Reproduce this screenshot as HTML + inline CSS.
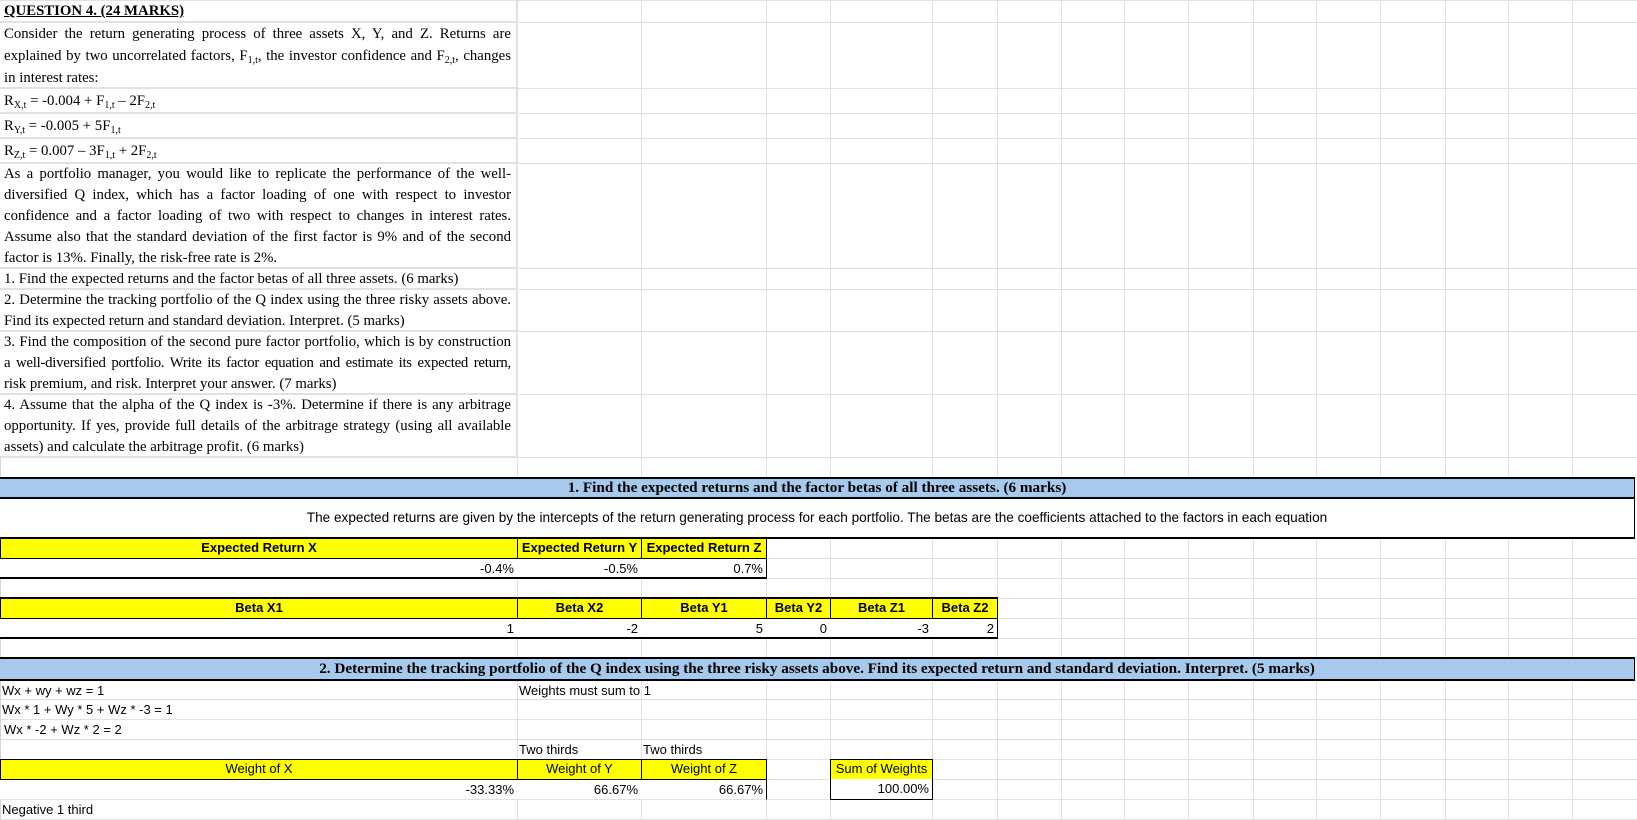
<!DOCTYPE html>
<html><head><meta charset="utf-8"><style>
body{margin:0;width:1637px;height:820px;overflow:hidden;background:#fff;position:relative;font-family:"Liberation Sans",sans-serif;}
.v{position:absolute;top:0;height:820px;width:1px;background:#e1e1e1}
.h{position:absolute;left:0;width:1637px;height:1px;background:#e1e1e1}
.c{position:absolute;box-sizing:border-box;background:#fff;overflow:hidden;white-space:nowrap}
.q{position:absolute;left:0;width:517px;box-sizing:border-box;padding:0 5px 0 4px;font-family:"Liberation Serif",serif;font-size:14.8px;line-height:21px;color:#000;background:#fff;border-bottom:1px solid #e1e1e1;border-right:1px solid #e1e1e1;white-space:nowrap}
.q div{text-align:justify;text-align-last:justify;white-space:normal}
.q div.l{text-align-last:left}
.q sub{font-size:10px;vertical-align:-3px;line-height:0}
.s{font-size:13px;line-height:20px}
.y{background:#ffff00;border:1px solid #000;text-align:center;font-weight:bold;font-size:13px;line-height:18px}
.yn{background:#ffff00;border:1px solid #000;text-align:center;font-size:13px;line-height:18px}
.r{text-align:right;font-size:13px;line-height:19px;padding-right:3px;border-right:1px solid #000;border-bottom:2px solid #000}
.blue{background:#a6c9ec;border-top:2px solid #000;border-bottom:2px solid #000;border-right:1px solid #000;text-align:center;font-family:"Liberation Serif",serif;font-weight:bold;font-size:15.2px;line-height:18px}
</style></head><body>
<div class="v" style="left:517px"></div><div class="v" style="left:641px"></div><div class="v" style="left:766px"></div><div class="v" style="left:830px"></div><div class="v" style="left:932px"></div><div class="v" style="left:997px"></div><div class="v" style="left:1061px"></div><div class="v" style="left:1124px"></div><div class="v" style="left:1188px"></div><div class="v" style="left:1253px"></div><div class="v" style="left:1316px"></div><div class="v" style="left:1380px"></div><div class="v" style="left:1445px"></div><div class="v" style="left:1508px"></div><div class="v" style="left:1572px"></div>
<div class="h" style="top:0"></div><div class="h" style="top:22px"></div><div class="h" style="top:88px"></div><div class="h" style="top:113px"></div><div class="h" style="top:138px"></div><div class="h" style="top:163px"></div><div class="h" style="top:268px"></div><div class="h" style="top:289px"></div><div class="h" style="top:331px"></div><div class="h" style="top:394px"></div><div class="h" style="top:457px"></div><div class="h" style="top:478px"></div><div class="h" style="top:498px"></div><div class="h" style="top:538px"></div><div class="h" style="top:558px"></div><div class="h" style="top:578px"></div><div class="h" style="top:598px"></div><div class="h" style="top:618px"></div><div class="h" style="top:638px"></div><div class="h" style="top:658px"></div><div class="h" style="top:680px"></div><div class="h" style="top:699px"></div><div class="h" style="top:719px"></div><div class="h" style="top:739px"></div><div class="h" style="top:759px"></div><div class="h" style="top:779px"></div><div class="h" style="top:799px"></div><div class="h" style="top:819px"></div>
<div class="v" style="left:0;background:#d6d6d6"></div>

<div class="q" style="top:1px;height:21px;font-weight:bold;text-decoration:underline">QUESTION 4. (24 MARKS)</div>
<div class="q" style="top:23px;height:65px;line-height:22px"><div>Consider the return generating process of three assets X, Y, and Z. Returns are</div><div>explained by two uncorrelated factors, F<sub>1,t</sub>, the investor confidence and F<sub>2,t</sub>, changes</div><div class="l">in interest rates:</div></div>
<div class="q" style="top:89px;height:24px;line-height:24px">R<sub>X,t</sub> = -0.004 + F<sub>1,t</sub> – 2F<sub>2,t</sub></div>
<div class="q" style="top:114px;height:24px;line-height:24px">R<sub>Y,t</sub> = -0.005 + 5F<sub>1,t</sub></div>
<div class="q" style="top:139px;height:24px;line-height:24px">R<sub>Z,t</sub> = 0.007 – 3F<sub>1,t</sub> + 2F<sub>2,t</sub></div>
<div class="q" style="top:164px;height:104px"><div>As a portfolio manager, you would like to replicate the performance of the well-</div><div>diversified Q index, which has a factor loading of one with respect to investor</div><div>confidence and a factor loading of two with respect to changes in interest rates.</div><div>Assume also that the standard deviation of the first factor is 9% and of the second</div><div class="l">factor is 13%. Finally, the risk-free rate is 2%.</div></div>
<div class="q" style="top:269px;height:20px">1. Find the expected returns and the factor betas of all three assets. (6 marks)</div>
<div class="q" style="top:290px;height:41px"><div>2. Determine the tracking portfolio of the Q index using the three risky assets above.</div><div class="l">Find its expected return and standard deviation. Interpret. (5 marks)</div></div>
<div class="q" style="top:332px;height:62px"><div>3. Find the composition of the second pure factor portfolio, which is by construction</div><div style="letter-spacing:-0.25px">a well-diversified portfolio. Write its factor equation and estimate its expected return,</div><div class="l">risk premium, and risk. Interpret your answer. (7 marks)</div></div>
<div class="q" style="top:395px;height:62px"><div>4. Assume that the alpha of the Q index is -3%. Determine if there is any arbitrage</div><div>opportunity. If yes, provide full details of the arbitrage strategy (using all available</div><div class="l">assets) and calculate the arbitrage profit. (6 marks)</div></div>

<div class="c blue" style="left:0;top:477px;width:1635px;height:22px">1. Find the expected returns and the factor betas of all three assets. (6 marks)</div>
<div class="c" style="left:0;top:499px;width:1635px;height:40px;border-bottom:2px solid #000;border-right:1px solid #000;text-align:center;font-size:13.6px;line-height:38px">The expected returns are given by the intercepts of the return generating process for each portfolio. The betas are the coefficients attached to the factors in each equation</div>

<div class="c y" style="left:0;top:538px;width:518px;height:21px">Expected Return X</div>
<div class="c y" style="left:517px;top:538px;width:125px;height:21px">Expected Return Y</div>
<div class="c y" style="left:641px;top:538px;width:126px;height:21px">Expected Return Z</div>
<div class="c r" style="left:0;top:559px;width:518px;height:20px">-0.4%</div>
<div class="c r" style="left:517px;top:559px;width:125px;height:20px">-0.5%</div>
<div class="c r" style="left:641px;top:559px;width:126px;height:20px">0.7%</div>

<div class="c y" style="left:0;top:597px;width:518px;height:22px;border-top:2px solid #000">Beta X1</div>
<div class="c y" style="left:517px;top:597px;width:125px;height:22px;border-top:2px solid #000">Beta X2</div>
<div class="c y" style="left:641px;top:597px;width:126px;height:22px;border-top:2px solid #000">Beta Y1</div>
<div class="c y" style="left:766px;top:597px;width:65px;height:22px;border-top:2px solid #000">Beta Y2</div>
<div class="c y" style="left:830px;top:597px;width:103px;height:22px;border-top:2px solid #000">Beta Z1</div>
<div class="c y" style="left:932px;top:597px;width:66px;height:22px;border-top:2px solid #000">Beta Z2</div>
<div class="c r" style="left:0;top:619px;width:518px;height:20px">1</div>
<div class="c r" style="left:517px;top:619px;width:125px;height:20px">-2</div>
<div class="c r" style="left:641px;top:619px;width:126px;height:20px">5</div>
<div class="c r" style="left:766px;top:619px;width:65px;height:20px">0</div>
<div class="c r" style="left:830px;top:619px;width:103px;height:20px">-3</div>
<div class="c r" style="left:932px;top:619px;width:66px;height:20px">2</div>

<div class="c blue" style="left:0;top:657px;width:1635px;height:24px;line-height:20px">2. Determine the tracking portfolio of the Q index using the three risky assets above. Find its expected return and standard deviation. Interpret. (5 marks)</div>
<div class="c s" style="left:2px;top:681px;width:400px;height:18px;background:none">Wx + wy + wz = 1</div>
<div class="c s" style="left:519px;top:681px;width:300px;height:18px;background:none">Weights must sum to 1</div>
<div class="c s" style="left:2px;top:700px;width:400px;height:18px;background:none">Wx * 1 + Wy * 5 + Wz * -3 = 1</div>
<div class="c s" style="left:4px;top:720px;width:400px;height:18px;background:none">Wx * -2 + Wz * 2 = 2</div>
<div class="c s" style="left:519px;top:740px;width:120px;height:18px;background:none">Two thirds</div>
<div class="c s" style="left:643px;top:740px;width:120px;height:18px;background:none">Two thirds</div>

<div class="c yn" style="left:0;top:759px;width:518px;height:21px">Weight of X</div>
<div class="c yn" style="left:517px;top:759px;width:125px;height:21px">Weight of Y</div>
<div class="c yn" style="left:641px;top:759px;width:126px;height:21px">Weight of Z</div>
<div class="c yn" style="left:830px;top:759px;width:103px;height:21px">Sum of Weights</div>
<div class="c r" style="left:0;top:780px;width:518px;height:20px;border-bottom:1px solid #e1e1e1;border-right:1px solid #e1e1e1">-33.33%</div>
<div class="c r" style="left:517px;top:780px;width:125px;height:20px;border-bottom:1px solid #e1e1e1;border-right:1px solid #e1e1e1">66.67%</div>
<div class="c r" style="left:641px;top:780px;width:126px;height:20px;border-bottom:1px solid #e1e1e1;border-right:1px solid #000">66.67%</div>
<div class="c r" style="left:830px;top:779px;width:103px;height:21px;border:1px solid #000;border-top:none">100.00%</div>
<div class="c s" style="left:2px;top:800px;width:300px;height:18px;background:none">Negative 1 third</div>
</body></html>
